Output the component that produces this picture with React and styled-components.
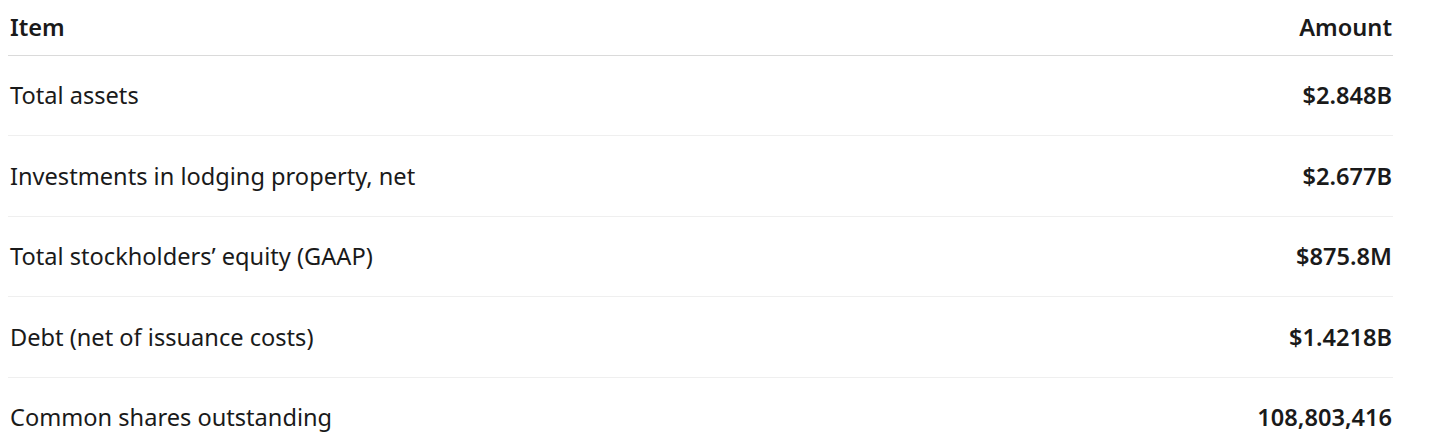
import React from "react";
import styled, { createGlobalStyle } from "styled-components";

const Global = createGlobalStyle`
  html, body { margin: 0; padding: 0; background: #ffffff; }
  body { font-family: "Noto Sans", "Open Sans", sans-serif; color: #1a1a1a; }
`;

const Wrap = styled.div`
  width: 1385px;
  margin-left: 8px;
`;

const Table = styled.div`
  display: flex;
  flex-direction: column;
`;

const Row = styled.div`
  display: grid;
  grid-template-columns: 1fr auto;
  align-items: center;
  padding: ${(p) => (p.$head ? "11px 1px 11.5px 2px" : "23.75px 1px 23.75px 2px")};
  border-bottom: 1px solid ${(p) => (p.$head ? "#dadada" : "#efefef")};
  &:last-child { border-bottom: none; }
`;

const Cell = styled.div`
  font-size: 23.6px;
  line-height: 32px;
  font-weight: ${(p) => (p.$head ? 600 : p.$num ? 600 : 400)};
  text-align: ${(p) => (p.$num ? "right" : "left")};
  color: #1a1a1a;
  white-space: nowrap;
`;

const rows = [
  ["Total assets", "$2.848B"],
  ["Investments in lodging property, net", "$2.677B"],
  ["Total stockholders’ equity (GAAP)", "$875.8M"],
  ["Debt (net of issuance costs)", "$1.4218B"],
  ["Common shares outstanding", "108,803,416"],
];

export default function App() {
  return (
    <Wrap>
      <Global />
      <Table>
        <Row $head>
          <Cell $head>Item</Cell>
          <Cell $head $num>Amount</Cell>
        </Row>
        {rows.map(([a, b]) => (
          <Row key={a}>
            <Cell>{a}</Cell>
            <Cell $num>{b}</Cell>
          </Row>
        ))}
      </Table>
    </Wrap>
  );
}
